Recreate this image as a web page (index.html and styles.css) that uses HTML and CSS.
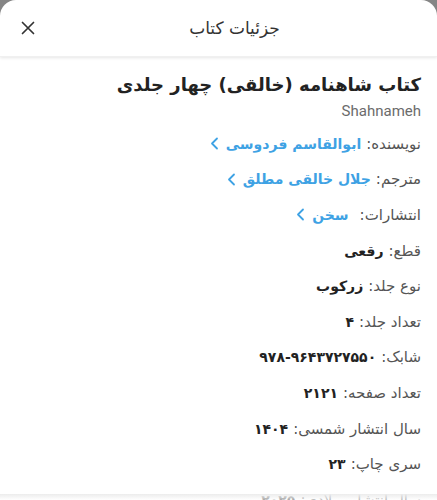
FILE: index.html
```html
<!DOCTYPE html>
<html lang="fa" dir="rtl">
<head>
<meta charset="utf-8">
<link rel="stylesheet" href="styles.css">
</head>
<body>
<div class="sheet">
  <header class="header">
    <span class="header-title">جزئیات کتاب</span>
    <button class="close" aria-label="بستن">
      <svg width="14" height="14" viewBox="0 0 14 14"><path d="M1.5 1.5 L12.5 12.5 M12.5 1.5 L1.5 12.5" stroke="#333" stroke-width="1.7" fill="none" stroke-linecap="round"/></svg>
    </button>
  </header>
  <main class="content">
    <h1 class="book-title">کتاب شاهنامه (خالقی) چهار جلدی</h1>
    <div class="latin" dir="ltr">Shahnameh</div>
    <ul class="props">
      <li><span class="label">نویسنده:</span> <a class="link">ابوالقاسم فردوسی<svg class="chev" width="9" height="13" viewBox="0 0 9 13"><path d="M7 1.5 L2 6.5 L7 11.5" stroke="#3ea2e4" stroke-width="1.8" fill="none" stroke-linecap="round" stroke-linejoin="round"/></svg></a></li>
      <li><span class="label">مترجم:</span> <a class="link">جلال خالقی مطلق<svg class="chev" width="9" height="13" viewBox="0 0 9 13"><path d="M7 1.5 L2 6.5 L7 11.5" stroke="#3ea2e4" stroke-width="1.8" fill="none" stroke-linecap="round" stroke-linejoin="round"/></svg></a></li>
      <li><span class="label">انتشارات:</span> <a class="link pub">سخن<svg class="chev" width="9" height="13" viewBox="0 0 9 13"><path d="M7 1.5 L2 6.5 L7 11.5" stroke="#3ea2e4" stroke-width="1.8" fill="none" stroke-linecap="round" stroke-linejoin="round"/></svg></a></li>
      <li><span class="label">قطع:</span> <b class="value">رقعی</b></li>
      <li><span class="label">نوع جلد:</span> <b class="value">زرکوب</b></li>
      <li><span class="label">تعداد جلد:</span> <b class="value">۴</b></li>
      <li><span class="label">شابک:</span> <b class="value">۹۷۸-۹۶۴۳۷۲۷۵۵۰</b></li>
      <li><span class="label">تعداد صفحه:</span> <b class="value">۲۱۲۱</b></li>
      <li><span class="label">سال انتشار شمسی:</span> <b class="value">۱۴۰۴</b></li>
      <li><span class="label">سری چاپ:</span> <b class="value">۲۳</b></li>
      <li><span class="label">سال انتشار میلادی:</span> <b class="value">۲۰۲۵</b></li>
    </ul>
  </main>
  <div class="bottom-edge"></div>
</div>
</body>
</html>
```
FILE: styles.css
```css
html, body {
  margin: 0;
  padding: 0;
  height: 100%;
  background: #858585;
  overflow: hidden;
}
body {
  font-family: "DejaVu Sans", "Noto Sans", sans-serif;
}
.sheet {
  position: relative;
  background: #fff;
  border-radius: 16px 16px 0 0;
  height: 500px;
  overflow: hidden;
}
.header {
  position: relative;
  height: 56px;
  display: flex;
  align-items: center;
  justify-content: center;
  padding-left: 32px;
  box-shadow: 0 1px 3px rgba(0,0,0,0.10);
  border-bottom: 1px solid #f0f0f0;
}
.header-title {
  font-size: 17px;
  color: #333;
}
.close {
  position: absolute;
  left: 21px;
  top: 21px;
  width: 14px;
  height: 14px;
  padding: 0;
  border: 0;
  background: none;
  display: flex;
}
.content {
  padding: 14px 16px 0 16px;
}
.book-title {
  margin: 0;
  font-size: 18px;
  font-weight: bold;
  color: #222;
  line-height: 28px;
}
.latin {
  font-family: Roboto, "Liberation Sans", sans-serif;
  font-size: 15px;
  color: #6b6b6b;
  text-align: right;
  line-height: 20px;
  margin-top: 2px;
}
.props {
  list-style: none;
  margin: 5px 0 0;
  padding: 0;
}
.props li {
  height: 35.6px;
  display: flex;
  align-items: center;
  gap: 5px;
  font-size: 15px;
  white-space: nowrap;
}
.label {
  color: #555;
}
.value {
  color: #222;
  font-weight: bold;
  font-size: 14px;
}
.link {
  color: #3ea2e4;
  font-weight: bold;
  font-size: 14px;
  display: inline-flex;
  align-items: center;
  gap: 7px;
}
.pub {
  margin-right: 6px;
}
.chev {
  display: block;
}
.bottom-edge {
  position: absolute;
  left: 0;
  right: 0;
  top: 494px;
  height: 6px;
  background: linear-gradient(#ececec, rgba(255,255,255,0.6));
}
```
